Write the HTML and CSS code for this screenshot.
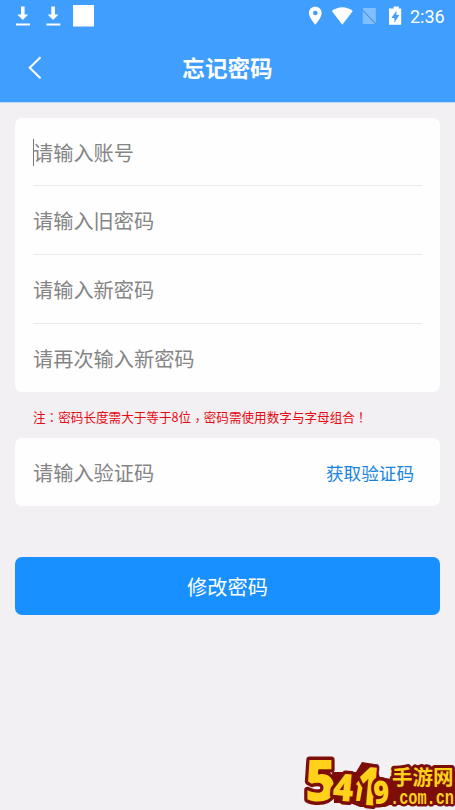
FILE: index.html
```html
<!DOCTYPE html>
<html lang="zh-CN">
<head>
<meta charset="utf-8">
<title>忘记密码</title>
<link rel="stylesheet" href="styles.css">
</head>
<body>
<header class="header">
  <div class="status">
    <svg class="status-left" width="80" height="24" viewBox="0 0 80 24" fill="#fff">
      <path id="dl" d="M6 1.500h3.600v8h3.600L7.800 15 2.300 9.500H6zM1 18.500h14v1.900H1z"/>
      <use href="#dl" x="30.300"/>
      <path d="M58 0h21v21.500H58z"/>
    </svg>
    <svg class="status-right" width="94" height="20" viewBox="0 0 94 20" fill="#fff">
      <path fill-rule="evenodd" d="M7.300.8C3.600.8.9 3.500.9 7c0 4.500 6.400 11.800 6.400 11.800S13.700 11.500 13.700 7C13.700 3.500 11 .8 7.300.8zm0 3.900a2.300 2.300 0 1 1 0 4.600 2.300 2.300 0 0 1 0-4.600z"/>
      <path d="M23.800 5Q34.300-2.500 44.800 5L34.300 18.800z"/>
      <path fill="#80bfff" d="M54.800 2h13v16h-13z"/>
      <path d="m53.500 3.200 14.500 15" fill="none" stroke="#5794ca" stroke-width="1.200"/>
      <path fill-rule="evenodd" d="M83 2.600h2.600V.5h5.200v2.100h2.400v16.200H81V2.600zm5.400 2.100-5 7.200h3v4.900l5-7.700h-3z"/>
    </svg>
    <span class="time">2:36</span>
  </div>
  <div class="nav">
    <svg class="back" width="16" height="24" viewBox="0 0 16 24"><path d="M13.500 1.200 2.700 11.700l10.800 10.500" fill="none" stroke="#fff" stroke-width="2"/></svg>
    <h1 class="title">忘记密码</h1>
  </div>
</header>
<main class="content">
  <section class="card">
    <div class="row"><span class="caret"></span>请输入账号</div>
    <div class="row">请输入旧密码</div>
    <div class="row">请输入新密码</div>
    <div class="row">请再次输入新密码</div>
  </section>
  <p class="note">注<span class="mid" lang="zh-TW">：</span>密码长度需大于等于8位<span class="mid comma" lang="zh-TW">，</span>密码需使用数字与字母组合<span class="mid" lang="zh-TW">！</span></p>
  <section class="card code">
    <span>请输入验证码</span>
    <span class="get">获取验证码</span>
  </section>
  <div class="submit">修改密码</div>
</main>
<svg class="watermark" width="155" height="60" viewBox="0 0 155 60">
  <path class="backing" d="M32 22 56 22 62 12 74 14 80 27 91 29 96 21 155 21V55H90L85 57 60 57 50 53 34 53z"/>
  <g class="brand">
    <text font-size="57" transform="translate(5 51) scale(.94 1)">5</text>
    <text font-size="38" transform="translate(32 50) rotate(5) scale(.92 1)">4</text>
    <path class="stroke" d="m60 29-4 5 2 2-2 15h4l4-22z"/>
    <text font-size="53" transform="translate(56 54) rotate(5) scale(.72 1)">1</text>
    <text font-size="32" transform="translate(74 54) rotate(-3) scale(.84 1)">9</text>
    <text class="cn" x="92" y="34.500" font-size="20.500">手游网</text>
    <text class="domain" x="90" y="54" font-size="20" textLength="64" lengthAdjust="spacingAndGlyphs">.com.cn</text>
  </g>
</svg>
</body>
</html>
```
FILE: styles.css
```css
* { box-sizing: border-box; }
body {
  margin: 0;
  height: 810px;
  overflow: hidden;
  position: relative;
  background: #f2f0f3;
  color: #858585;
  font-family: "Noto Sans CJK SC", sans-serif;
}
.header {
  height: 103px;
  background: #409eff;
  border-bottom: 1px solid #b8d9fb;
  color: #fff;
}
.status { height: 33px; display: flex; align-items: flex-start; padding: 5px 10px 0 15px; }
.status-left { flex: none; }
.status-right { margin: 1px 8px 0 auto; }
.time { font: 400 18px/23px Roboto, sans-serif; width: 35px; white-space: nowrap; }
.nav { height: 70px; display: grid; grid-template-columns: 60px 1fr 60px; align-items: center; }
.back { margin-left: 27px; }
.title { margin: 0; text-align: center; font-size: 22.600px; line-height: 34px; font-weight: 700; }
.content { padding: 15px 15px 0; }
.card { background: #fefefe; border-radius: 7px; padding: 0 18px; font-size: 20.200px; }
.row { height: 69px; display: flex; align-items: center; border-bottom: 1px solid #ebebeb; }
.row:first-child { height: 68px; padding-top: 1px; }
.row:last-child { height: 69px; border: 0; margin-bottom: -1px; }
.card:first-child { height: 274px; }
.caret { width: 1px; height: 27px; background: #777; margin-right: -1px; }
.note {
  margin: 0;
  height: 46px;
  padding: 3px 18px 0;
  color: #e60a14;
  font-size: 12.600px;
  line-height: 44px;
  white-space: nowrap;
}
.mid { font-family: "Noto Sans CJK TC", sans-serif; }
.comma { position: relative; top: 3px; }
.card.code { height: 68px; display: flex; align-items: center; justify-content: space-between; padding-right: 26px; }
.get { color: #1684df; font-size: 17.600px; }
.submit {
  height: 58px;
  margin-top: 51px;
  border-radius: 7px;
  background: #1890ff;
  color: #fff;
  font-size: 20.200px;
  line-height: 59px;
  text-align: center;
}
.watermark { position: absolute; right: 0; bottom: 0; }
.backing { fill: #7c0d08; }
.brand {
  fill: #ffd11a;
  stroke: #7c0d08;
  stroke-width: 7px;
  stroke-linejoin: round;
  paint-order: stroke;
  font-family: "Open Sans", sans-serif;
  font-weight: 800;
}
.stroke { stroke-width: 4px; }
.cn { font-family: "Noto Sans CJK SC", sans-serif; font-weight: 700; stroke-width: 6px; }
.domain { font-family: "Liberation Mono", monospace; font-weight: 700; stroke-width: 5px; }
```
